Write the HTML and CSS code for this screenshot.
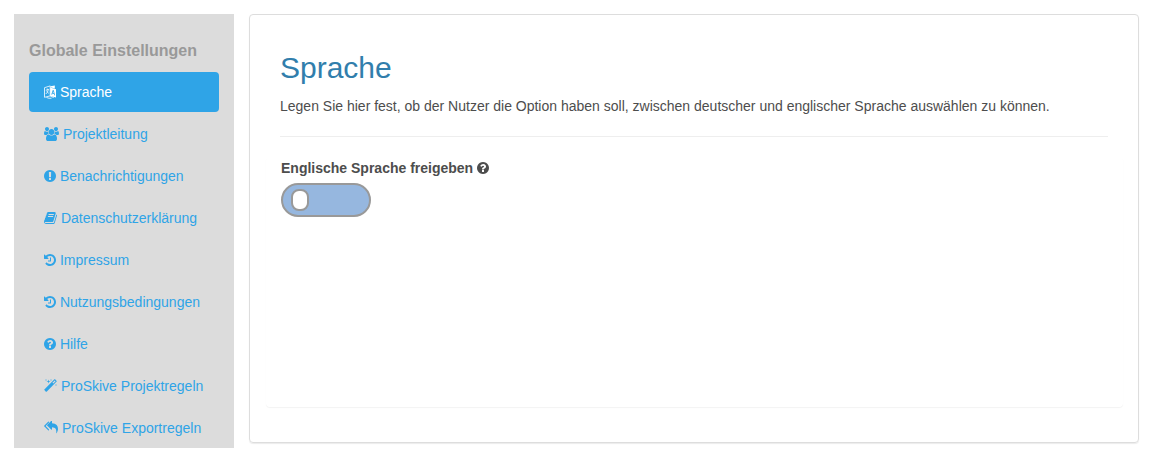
FILE: index.html
```html
<!DOCTYPE html>
<html lang="de">
<head>
<meta charset="utf-8">
<title>Globale Einstellungen</title>
<link rel="stylesheet" href="styles.css">
</head>
<body>
<svg class="sprite" aria-hidden="true">
  <symbol id="history" viewBox="128 0 1536 1792"><path d="M1664 896q0 156-61 298t-164 245-245 164-298 61q-172 0-327-72.500t-264-204.500q-7-10-6.500-22.500t8.500-20.500l137-138q10-9 25-9 16 2 23 12 73 95 179 147t225 52q104 0 198.500-40.500t163.500-109.500 109.500-163.500 40.500-198.500-40.500-198.500-109.500-163.500-163.500-109.500-198.500-40.500q-98 0-188 35.500t-160 101.500l137 138q31 30 14 69-17 40-59 40h-448q-26 0-45-19t-19-45v-448q0-42 40-59 39-17 69 14l130 129q107-101 244.500-156.500t284.500-55.500q156 0 298 61t245 164 164 245 61 298zm-640-288v448q0 14-9 23t-23 9h-320q-14 0-23-9t-9-23v-64q0-14 9-23t23-9h224v-352q0-14 9-23t23-9h64q14 0 23 9t9 23z"/></symbol>
  <symbol id="question" viewBox="128 0 1536 1792"><path d="M1024 1376v-192q0-14-9-23t-23-9h-192q-14 0-23 9t-9 23v192q0 14 9 23t23 9h192q14 0 23-9t9-23zm256-672q0-88-55.500-163t-138.500-116-170-41q-243 0-371 213-15 24 8 42l132 100q7 6 19 6 16 0 25-12 53-68 86-92 34-24 86-24 48 0 85.500 26t37.500 59q0 38-20 61t-68 45q-63 28-115.500 86.500t-52.500 125.500v36q0 14 9 23t23 9h192q14 0 23-9t9-23q0-19 21.500-49.500t54.500-49.500q32-18 49-28.500t46-35 44.500-48 28-60.500 12.500-81zm384 192q0 209-103 385.500t-279.500 279.500-385.500 103-385.500-103-279.500-279.500-103-385.500 103-385.500 279.500-279.500 385.500-103 385.500 103 279.500 279.500 103 385.500z"/></symbol>
</svg>
<div class="page">
  <nav class="sidebar" aria-labelledby="nav-title">
    <h2 class="sidebar-title" id="nav-title">Globale Einstellungen</h2>
    <ul class="nav">
      <li><a class="nav-link active" href="#sprache"><svg class="icon" viewBox="0 0 12 14" aria-hidden="true"><path fill="none" stroke="currentColor" stroke-width=".8" d="M.5 2.700 6.200.9v10L.5 12.300zM1.800 5.200l3-.8M3.200 3.500l.3 1.200M4.400 4.500Q3.800 7.500 1.800 9M2.400 6l2.400 2.400M6.200 11l3.500 1.600M2.500 12.500q2.500 1.200 5 .7"/><path fill-rule="evenodd" d="M6.200 2.600 12 4.200v8.200L6.200 10.900zM8.800 5 7.300 9.500l.8.200.4-1.200 1.400.4.400 1.400.8.200L9.800 5.300zM9.200 6.200l.5 1.900-1-.2zM6.500 1.300l4.300-.8v3L6.500 2.300z"/></svg> Sprache</a></li>
      <li><a class="nav-link" href="#projektleitung"><svg class="icon icon-wide" viewBox="-64 0 1920 1792" aria-hidden="true"><path d="M529 896q-162 5-265 128h-134q-82 0-138-40.500t-56-118.500q0-353 124-353 6 0 43.500 21t97.500 42.500 119 21.500q67 0 133-23-5 37-5 66 0 139 81 256zm1071 637q0 120-73 189.500t-194 69.500h-874q-121 0-194-69.500t-73-189.500q0-53 3.500-103.500t14-109 26.500-108.500 43-97.500 62-81 85.500-53.500 111.500-20q10 0 43 21.500t73 48 107 48 135 21.500 135-21.500 107-48 73-48 43-21.500q61 0 111.500 20t85.500 53.500 62 81 43 97.500 26.500 108.500 14 109 3.500 103.500zm-1024-1277q0 106-75 181t-181 75-181-75-75-181 75-181 181-75 181 75 75 181zm704 384q0 159-112.500 271.500t-271.500 112.500-271.500-112.500-112.500-271.500 112.500-271.500 271.500-112.500 271.500 112.500 112.500 271.500zm576 225q0 78-56 118.500t-138 40.500h-134q-103-123-265-128 81-117 81-256 0-29-5-66 66 23 133 23 59 0 119-21.500t97.500-42.500 43.500-21q124 0 124 353zm-128-609q0 106-75 181t-181 75-181-75-75-181 75-181 181-75 181 75 75 181z"/></svg> Projektleitung</a></li>
      <li><a class="nav-link" href="#benachrichtigungen"><svg class="icon" viewBox="128 0 1536 1792" aria-hidden="true"><path d="M896 128q209 0 385.500 103t279.500 279.500 103 385.500-103 385.500-279.500 279.500-385.500 103-385.500-103-279.500-279.500-103-385.500 103-385.500 279.500-279.500 385.500-103zm128 1247v-190q0-14-9-23.500t-22-9.500h-192q-13 0-23 10t-10 23v190q0 13 10 23t23 10h192q13 0 22-9.500t9-23.500zm-2-344l18-621q0-12-10-18-10-8-24-8h-220q-14 0-24 8-10 6-10 18l17 621q0 10 10 17.500t24 7.500h185q14 0 23.500-7.500t10.500-17.500z"/></svg> Benachrichtigungen</a></li>
      <li><a class="nav-link" href="#datenschutz"><svg class="icon icon-medium" viewBox="64 0 1664 1792" aria-hidden="true"><path d="M1703 478q40 57 18 129l-275 906q-19 64-76.500 107.500t-122.500 43.500h-923q-77 0-148.500-53.500t-99.500-131.500q-24-67-2-127 0-4 3-27t4-37q1-8-3-21.500t-3-19.500q2-11 8-21t16.500-23.500 16.500-23.500q23-38 45-91.500t30-91.500q3-10 .5-30t-.5-28q3-11 17-28t17-23q21-36 42-92t25-90q1-9-2.500-32t.5-28q4-13 22-30.500t22-22.500q19-26 42.500-84.500t27.500-96.500q1-8-3-25.500t-2-26.500q2-8 9-18t18-23 17-21q8-12 16.500-30.500t15-35 16-36 19.500-32 26.500-23.500 36-11.500 47.500 5.500l-1 3q38-9 51-9h761q74 0 114 56t18 130l-274 906q-36 119-71.500 153.500t-128.500 34.500h-869q-27 0-38 15-11 16-1 43 24 70 144 70h923q29 0 56-15.500t35-41.500l300-987q7-22 5-57 38 15 59 43zm-1064 2q-4 13 2 22.500t20 9.500h608q13 0 25.500-9.500t16.500-22.500l21-64q4-13-2-22.500t-20-9.500h-608q-13 0-25.500 9.500t-16.500 22.500zm-83 256q-4 13 2 22.500t20 9.500h608q13 0 25.500-9.500t16.500-22.500l21-64q4-13-2-22.500t-20-9.500h-608q-13 0-25.500 9.500t-16.500 22.500z"/></svg> Datenschutzerklärung</a></li>
      <li><a class="nav-link" href="#impressum"><svg class="icon" aria-hidden="true"><use href="#history"/></svg> Impressum</a></li>
      <li><a class="nav-link" href="#nutzungsbedingungen"><svg class="icon" aria-hidden="true"><use href="#history"/></svg> Nutzungsbedingungen</a></li>
      <li><a class="nav-link" href="#hilfe"><svg class="icon" aria-hidden="true"><use href="#question"/></svg> Hilfe</a></li>
      <li><a class="nav-link" href="#projektregeln"><svg class="icon icon-medium" viewBox="64 0 1664 1792" aria-hidden="true"><path d="M1254 581l293-293-107-107-293 293zm447-293q0 27-18 45l-1286 1286q-18 18-45 18t-45-18l-198-198q-18-18-18-45t18-45l1286-1286q18-18 45-18t45 18l198 198q18 18 18 45zm-1351-190l98 30-98 30-30 98-30-98-98-30 98-30 30-98zm350 162l196 60-196 60-60 196-60-196-196-60 196-60 60-196zm930 478l98 30-98 30-30 98-30-98-98-30 98-30 30-98zm-640-640l98 30-98 30-30 98-30-98-98-30 98-30 30-98z"/></svg> ProSkive Projektregeln</a></li>
      <li><a class="nav-link" href="#exportregeln"><svg class="icon icon-square" viewBox="0 0 1792 1792" aria-hidden="true"><path d="M640 1082v70q0 42-39 59-13 5-25 5-27 0-45-19l-512-512q-19-19-19-45t19-45l512-512q29-31 70-14 39 17 39 59v69l-397 398q-19 19-19 45t19 45zm1152-58q0 58-17 133.500t-38.500 138-48 125-40.500 90.500l-20 40q-8 17-28 17-6 0-9-1-25-8-23-34 43-400-106-565-64-71-170.500-110.500t-267.500-52.500v251q0 42-39 59-13 5-25 5-27 0-45-19l-512-512q-19-19-19-45t19-45l512-512q29-31 70-14 39 17 39 59v262q411 28 599 221 169 173 169 509z"/></svg> ProSkive Exportregeln</a></li>
    </ul>
  </nav>
  <main class="panel" id="sprache">
    <header class="intro">
      <h1 class="title">Sprache</h1>
      <p class="lead">Legen Sie hier fest, ob der Nutzer die Option haben soll, zwischen deutscher und englischer Sprache auswählen zu können.</p>
    </header>
    <section class="settings">
      <label class="label" for="english">Englische Sprache freigeben <svg class="icon" aria-hidden="true"><use href="#question"/></svg></label>
      <input class="switch" type="checkbox" role="switch" id="english">
    </section>
  </main>
</div>
</body>
</html>
```
FILE: styles.css
```css
*,
*::before {
  box-sizing: border-box;
}

body {
  margin: 0;
  background: #fff;
  color: #4d4d4d;
  font: 14px/20px "Liberation Sans", Arial, sans-serif;
}

.sprite {
  display: none;
}

.page {
  display: flex;
  align-items: flex-start;
  gap: 15px;
  padding: 14px;
}

.sidebar {
  flex: 0 0 220px;
  padding: 27px 15px 0;
  background: #dcdcdc;
}

.sidebar-title {
  margin: 0 0 11px;
  color: #999;
  font-size: 16px;
  line-height: 20px;
}

.nav {
  display: flex;
  flex-direction: column;
  gap: 2px;
  margin: 0;
  padding: 0;
  list-style: none;
}

.nav-link {
  display: block;
  padding: 10px 15px;
  border-radius: 4px;
  color: #2fa4e7;
  text-decoration: none;
}

.nav-link.active {
  background: #2fa4e7;
  color: #fff;
}

.icon {
  width: 12px;
  height: 14px;
  fill: currentColor;
  vertical-align: -2px;
}

.icon-medium {
  width: 13px;
}

.icon-square {
  width: 14px;
}

.icon-wide {
  width: 15px;
}

.panel {
  flex: 1;
  min-width: 0;
  padding: 35px 15px;
  border: 1px solid #ddd;
  border-radius: 4px;
  box-shadow: 0 1px 1px rgba(0, 0, 0, 0.08);
}

.intro {
  margin: 0 15px;
  padding-bottom: 20px;
  border-bottom: 1px solid #eee;
}

.title {
  margin: 0 0 10px;
  color: #317eac;
  font-size: 30px;
  font-weight: 400;
  line-height: 36px;
}

.lead {
  margin: 0;
}

.settings {
  min-height: 250px;
  margin: 20px 0 0 1px;
  padding: 1px 15px;
  border-radius: 4px;
  box-shadow: 0 1px 1px rgba(0, 0, 0, 0.05);
}

.label {
  display: block;
  margin-bottom: 5px;
  font-weight: 700;
}

.switch {
  display: flex;
  align-items: center;
  width: 90px;
  height: 34px;
  margin: 0;
  padding: 0 8px;
  border: 2px solid #999;
  border-radius: 17px;
  background: #96b7df;
  appearance: none;
}

.switch::before {
  width: 18px;
  height: 22px;
  border: 2px solid #999;
  border-radius: 8px;
  background: #fff;
  content: "";
}

.switch:checked {
  justify-content: flex-end;
}
```
